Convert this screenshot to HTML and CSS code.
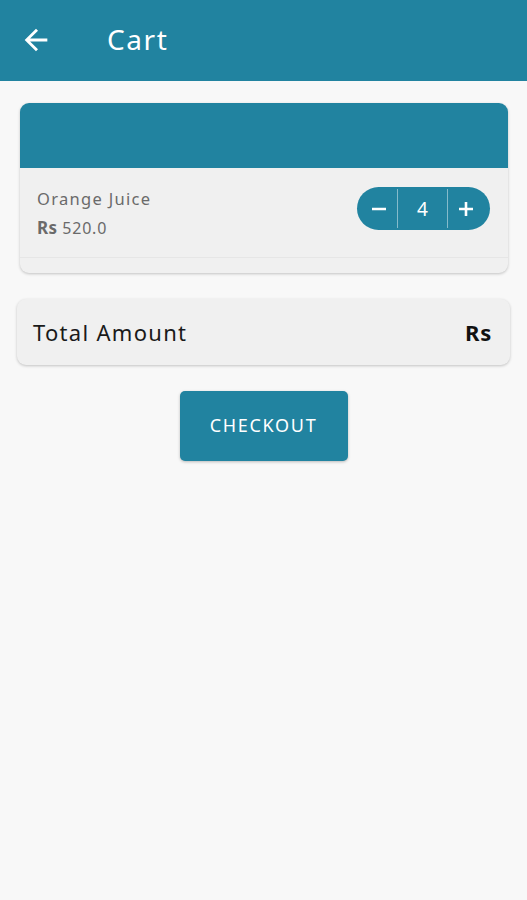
FILE: index.html
```html
<!DOCTYPE html>
<html lang="en">
<head>
<meta charset="utf-8">
<title>Cart</title>
<link rel="stylesheet" href="styles.css">
</head>
<body>
<header class="appbar">
  <svg class="back" width="34" height="34" viewBox="0 0 24 24"><path d="M20 11H7.83l5.59-5.59L12 4l-8 8 8 8 1.41-1.41L7.83 13H20v-2z" fill="#fff"/></svg>
  <h1 class="title">Cart</h1>
</header>
<main class="content">
  <section class="card">
    <div class="card-head"></div>
    <div class="item">
      <div class="item-info">
        <div class="item-name">Orange Juice</div>
        <div class="item-price"><b>Rs</b> 520.0</div>
      </div>
      <div class="stepper">
        <span class="step-btn">
          <svg width="18" height="18" viewBox="0 0 18 18"><path d="M2 9h14" stroke="#fff" stroke-width="2.6"/></svg>
        </span>
        <span class="step-qty">4</span>
        <span class="step-btn">
          <svg width="18" height="18" viewBox="0 0 18 18"><path d="M2 9h14M9 2v14" stroke="#fff" stroke-width="2.6"/></svg>
        </span>
      </div>
    </div>
    <div class="card-foot"></div>
  </section>
  <section class="total">
    <span class="total-label">Total Amount</span>
    <span class="total-value">Rs</span>
  </section>
  <div class="actions">
    <button class="checkout">CHECKOUT</button>
  </div>
</main>
</body>
</html>
```
FILE: styles.css
```css
* { box-sizing: border-box; }
html, body { margin: 0; padding: 0; }
body {
  background: #f8f8f8;
  font-family: "Noto Sans", "Open Sans", sans-serif;
  width: 527px;
  height: 900px;
  overflow: hidden;
}
.appbar {
  height: 81px;
  background: #2183a0;
  display: flex;
  align-items: center;
  padding-left: 19px;
}
.back { display: block; margin-bottom: 1px; }
.title {
  margin: 0 0 3px 54px;
  color: #fff;
  font-size: 28px;
  font-weight: 400;
  letter-spacing: 1.6px;
}
.content {
  padding: 22px 17px 0 17px;
  display: flex;
  flex-direction: column;
}
.card {
  margin: 0 2px 0 3px;
  background: #f0f0f0;
  border-radius: 9px;
  box-shadow: 0 1px 3px rgba(0,0,0,0.22);
  overflow: hidden;
}
.card-head {
  height: 65px;
  background: #2183a0;
}
.item {
  display: flex;
  justify-content: space-between;
  align-items: flex-start;
  padding: 19px 18px 0 17px;
  height: 90px;
  border-bottom: 1px solid #e6e6e6;
}
.item-info { padding-top: 1px; }
.item-name {
  font-size: 16.5px;
  color: #6a6a6a;
  line-height: 22px;
  letter-spacing: 1.3px;
}
.item-price {
  font-size: 16px;
  color: #6a6a6a;
  line-height: 22px;
  margin-top: 7px;
  letter-spacing: 0.8px;
}
.item-price b { font-weight: 700; font-size: 17px; letter-spacing: 0.3px; }
.stepper {
  display: flex;
  align-items: stretch;
  height: 43px;
  width: 133px;
  background: #2183a0;
  border-radius: 22px;
  color: #fff;
}
.step-btn {
  width: 40px;
  display: flex;
  align-items: center;
  justify-content: center;
}
.step-btn:first-child { padding-left: 4px; }
.step-btn:last-child { width: 42px; padding-right: 6px; }
.step-qty {
  width: 51px;
  display: flex;
  align-items: center;
  justify-content: center;
  font-size: 19px;
  border-left: 1px solid rgba(255,255,255,0.45);
  border-right: 1px solid rgba(255,255,255,0.45);
  margin: 2px 0;
}
.card-foot { height: 15px; }
.total {
  margin-top: 26px;
  height: 66px;
  background: #f0f0f0;
  border-radius: 9px;
  box-shadow: 0 1px 3px rgba(0,0,0,0.22);
  display: flex;
  align-items: center;
  justify-content: space-between;
  padding: 0 18px 0 16px;
}
.total-label {
  font-size: 22px;
  color: #1a1a1a;
  letter-spacing: 1.3px;
}
.total-value {
  font-size: 22px;
  font-weight: 700;
  color: #111;
  letter-spacing: 0.8px;
}
.actions {
  display: flex;
  justify-content: center;
  margin-top: 26px;
}
.checkout {
  width: 168px;
  height: 70px;
  background: #2183a0;
  border: none;
  border-radius: 5px;
  color: #fff;
  font-family: inherit;
  font-size: 18px;
  letter-spacing: 1.7px;
  box-shadow: 0 1px 3px rgba(0,0,0,0.25);
  padding: 0 0 2px 0;
}
```
